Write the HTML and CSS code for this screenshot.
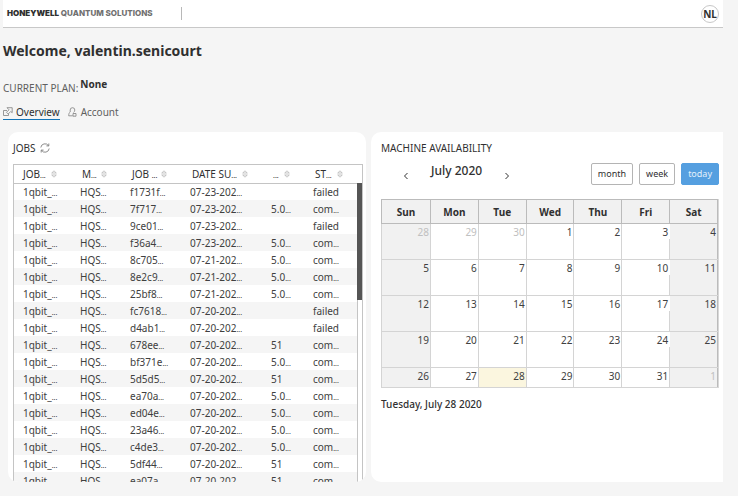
FILE: index.html
```html
<!DOCTYPE html>
<html lang="en">
<head>
<meta charset="utf-8">
<title>Honeywell Quantum Solutions</title>
<link rel="stylesheet" href="styles.css">
</head>
<body>
<header class="topbar">
  <div class="brand"><strong>HONEYWELL</strong> QUANTUM SOLUTIONS</div>
  <button class="avatar" type="button">NL</button>
</header>
<main class="page">
  <h1 class="welcome">Welcome, valentin.senicourt</h1>
  <p class="plan">CURRENT PLAN: <strong>None</strong></p>
  <nav class="tabs">
    <a class="tab active" href="#overview">
      <svg class="tab-icon" viewBox="0 0 10 10"><path d="M4 3.5H.5v5h5V7M4 .7h5.2v5L7.7 4.5 5.2 7 3.5 5.3 6 2.8z"/></svg>Overview</a>
    <a class="tab" href="#account">
      <svg class="tab-icon" viewBox="0 0 10 10"><path d="M2.2 5V3a2.3 2.3 0 0 1 4.6 0c0 1-.5 2-1.3 2.5M2.2 5C1 5.8.7 7 .7 8.8h4M5 6.5h3v2.7H5z"/></svg>Account</a>
  </nav>
  <div class="cards">
    <section class="card jobs">
      <h2 class="card-title">JOBS
        <button class="refresh" type="button" aria-label="Refresh"><svg viewBox="0 0 10 10"><path d="M.8 4.5A4.2 4.2 0 0 1 8.5 2.7M9.2 5.5a4.2 4.2 0 0 1-7.7 1.8M8.8.5v2.4H6.4M1.2 9.5V7.1h2.4"/></svg></button>
      </h2>
      <div class="job-list">
        <table class="job-table">
          <colgroup><col class="c-name"><col class="c-machine"><col class="c-id"><col class="c-date"><col class="c-cost"><col></colgroup>
          <thead><tr id="job-head"></tr></thead>
          <tbody id="job-rows"></tbody>
        </table>
        <div class="track"><div class="thumb"></div></div>
      </div>
    </section>
    <section class="card availability">
      <h2 class="card-title">MACHINE AVAILABILITY</h2>
      <div class="toolbar">
        <div class="month-nav">
          <button class="arrow" type="button" aria-label="Previous month"><svg viewBox="0 0 6 8"><path d="M4.5 1 1.5 4l3 3"/></svg></button>
          <h3 class="month">July 2020</h3>
          <button class="arrow" type="button" aria-label="Next month"><svg viewBox="0 0 6 8"><path d="m1.5 1 3 3-3 3"/></svg></button>
        </div>
        <div class="views">
          <button class="view" type="button">month</button>
          <button class="view" type="button">week</button>
          <button class="view today" type="button">today</button>
        </div>
      </div>
      <div class="calendar-frame">
        <table class="calendar">
          <thead><tr><th>Sun</th><th>Mon</th><th>Tue</th><th>Wed</th><th>Thu</th><th>Fri</th><th>Sat</th></tr></thead>
          <tbody>
            <tr><td class="other">28</td><td class="other">29</td><td class="other">30</td><td>1</td><td>2</td><td>3</td><td>4</td></tr>
            <tr><td>5</td><td>6</td><td>7</td><td>8</td><td>9</td><td>10</td><td>11</td></tr>
            <tr><td>12</td><td>13</td><td>14</td><td>15</td><td>16</td><td>17</td><td>18</td></tr>
            <tr><td>19</td><td>20</td><td>21</td><td>22</td><td>23</td><td>24</td><td>25</td></tr>
            <tr><td>26</td><td>27</td><td class="current">28</td><td>29</td><td>30</td><td>31</td><td class="other">1</td></tr>
          </tbody>
        </table>
      </div>
      <p class="selected-date">Tuesday, July 28 2020</p>
    </section>
  </div>
</main>
<script src="jobs.js"></script>
</body>
</html>
```
FILE: styles.css
```css
* { box-sizing: border-box; }
body {
  margin: 0;
  height: 100vh;
  padding: 0 15px 14px 3px;
  display: flex;
  flex-direction: column;
  background: #f5f5f5;
  color: #303030;
  font: 10px/16px "Noto Sans", sans-serif;
}
h1, h2, h3, p { margin: 0; font-weight: 400; }
button { font: inherit; color: inherit; padding: 0; border: 0; background: none; }
svg { display: block; fill: none; stroke: currentColor; }
table { border-collapse: collapse; table-layout: fixed; width: 100%; }

.topbar {
  height: 28px;
  flex: none;
  display: flex;
  align-items: center;
  justify-content: space-between;
  padding: 0 4px;
  background: #fff;
  border-bottom: 1px solid #c8c8c8;
}
.brand {
  padding-right: 28px;
  border-right: 1px solid #b8b8b8;
  font: 800 8px/13px Inter, sans-serif;
  color: #707070;
}
.brand strong { font-weight: 900; color: #303030; }
.avatar {
  width: 18px;
  height: 18px;
  border: 1px solid #c8c8c8;
  border-radius: 50%;
  font: 700 10px/16px "Noto Sans", sans-serif;
}

.page { flex: 1; min-height: 0; display: flex; flex-direction: column; }
.welcome { margin-top: 12px; font-size: 14px; line-height: 22px; font-weight: 700; }
.plan { margin-top: 16px; display: flex; gap: 2px; line-height: 20px; color: #606060; }
.plan strong { line-height: 12px; color: #303030; }
.tabs { display: flex; gap: 8px; margin-top: 6px; }
.tab {
  display: flex;
  align-items: center;
  gap: 3px;
  height: 16px;
  color: #606060;
  text-decoration: none;
  border-bottom: 1px solid transparent;
}
.tab.active { color: #303030; border-color: #1274b7; }
.tab-icon { width: 10px; height: 10px; stroke: #808080; stroke-width: 0.8; }

.cards {
  flex: 1;
  min-height: 0;
  display: grid;
  grid-template-columns: 358fr 352fr;
  gap: 5px;
  margin: 12px 0 0 5px;
}
.card { background: #fff; overflow: hidden; }
.card-title { display: flex; align-items: center; gap: 4px; font-size: 10px; line-height: 16px; }
.jobs { border-radius: 10px; padding: 8px 3px 0 5px; display: flex; flex-direction: column; }
.refresh svg { width: 10px; height: 10px; stroke: #707070; stroke-width: 0.8; }

.job-list {
  position: relative;
  flex: 1;
  min-height: 0;
  margin-top: 8px;
  overflow: hidden;
  border: 1px solid #c4c4c4;
  border-bottom: 0;
}
.c-name { width: 57px; }
.c-machine { width: 50px; }
.c-id { width: 60px; }
.c-date { width: 81px; }
.c-cost { width: 42px; }
.job-table th { height: 18px; padding: 0 14px 0 11px; border-bottom: 1px solid #c4c4c4; font-weight: 400; }
.job-table th:first-child { padding-left: 9px; }
.job-table th:last-child { padding-right: 19px; }
.job-head { display: flex; align-items: center; justify-content: space-between; line-height: 16px; white-space: nowrap; }
.job-head svg { width: 6px; height: 8px; stroke: #a0a0a0; stroke-width: 0.6; }
.job-table td { height: 17px; padding: 0 0 0 9px; line-height: 16px; white-space: nowrap; color: #404040; }
.job-table tbody tr:nth-child(even) { background: #f5f5f5; }
.dots { font-size: 7px; line-height: 10px; }
.track {
  position: absolute;
  top: 18px;
  right: 0;
  bottom: 0;
  width: 5px;
  background: #fff;
  border-left: 1px solid #c4c4c4;
}
.thumb { height: 39%; margin-left: -1px; background: #555; }

.availability { border-radius: 10px 0 0 10px; padding: 8px 4px 0 10px; }
.toolbar { display: flex; justify-content: space-between; margin-top: 7px; }
.month-nav { display: flex; gap: 22px; padding-left: 22px; }
.arrow { align-self: flex-end; height: 18px; }
.arrow svg { width: 6px; height: 8px; }
.month { font-size: 12px; line-height: 16px; font-weight: 500; }
.views { display: flex; gap: 6px; }
.view { height: 22px; padding: 0 6px; border: 1px solid #b4b4b4; border-radius: 2px; font-size: 9px; }
.view.today { background: #559fe0; border-color: #559fe0; color: #e4f1fc; }

.calendar-frame { margin-top: 14px; padding-right: 1px; background: #d8d8d8; }
.calendar { background: #fff; border-right: 1px solid #bbb; }
.calendar th { height: 24px; padding: 0; background: #f1f1f1; border: 1px solid #bbb; font-weight: 700; }
.calendar th:first-child { width: 49px; }
.calendar td {
  position: relative;
  height: 36px;
  padding: 0 1px 0 0;
  border: 1px solid #d4d4d4;
  line-height: 16px;
  text-align: right;
  vertical-align: top;
  color: #404040;
}
.calendar td:first-child, .calendar td:last-child { background: #f1f1f1; }
.calendar tr:last-child td { height: 20px; }
.calendar th:last-child, .calendar td:last-child { border-right-color: #bbb; }
.calendar tr:not(:last-child) td:nth-child(6)::after {
  content: "";
  position: absolute;
  top: 0;
  right: -1px;
  width: 1px;
  height: 15px;
  background: #fff;
}
.calendar td.other { color: #c0c0c0; }
.calendar .current { background: #fbf6df; }
.selected-date { margin-top: 8px; font-weight: 500; }
```
FILE: jobs.js
```js
const dots = '<span class="dots">...</span>';
const format = (text) => text.replace('…', dots);
const sortIcon = '<svg viewBox="0 0 6 8"><path d="M.7 3 3 .8 5.3 3zM.7 5 3 7.2 5.3 5z"/></svg>';

const columns = ['JOB…', 'M…', 'JOB …', 'DATE SU…', '…', 'ST…'];
const jobs = [
  ['f1731f…', '23', '', 'failed'],
  ['7f717…', '23', '5.0…', 'com…'],
  ['9ce01…', '23', '', 'failed'],
  ['f36a4…', '23', '5.0…', 'com…'],
  ['8c705…', '21', '5.0…', 'com…'],
  ['8e2c9…', '21', '5.0…', 'com…'],
  ['25bf8…', '21', '5.0…', 'com…'],
  ['fc7618…', '20', '', 'failed'],
  ['d4ab1…', '20', '', 'failed'],
  ['678ee…', '20', '51', 'com…'],
  ['bf371e…', '20', '5.0…', 'com…'],
  ['5d5d5…', '20', '51', 'com…'],
  ['ea70a…', '20', '5.0…', 'com…'],
  ['ed04e…', '20', '5.0…', 'com…'],
  ['23a46…', '20', '5.0…', 'com…'],
  ['c4de3…', '20', '5.0…', 'com…'],
  ['5df44…', '20', '51', 'com…'],
  ['ea07a…', '20', '51', 'com…'],
];

document.getElementById('job-head').innerHTML = columns
  .map((name) => `<th><div class="job-head"><span>${format(name)}</span>${sortIcon}</div></th>`)
  .join('');

document.getElementById('job-rows').innerHTML = jobs
  .map(([id, day, cost, status]) => ['1qbit_…', 'HQS…', id, `07-${day}-202…`, cost, status])
  .map((cells) => `<tr>${cells.map((cell) => `<td>${format(cell)}</td>`).join('')}</tr>`)
  .join('');
```
